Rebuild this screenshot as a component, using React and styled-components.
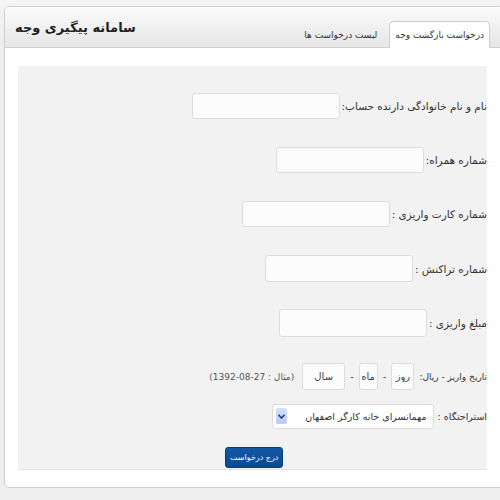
import React from "react";
import styled, { createGlobalStyle } from "styled-components";

const Global = createGlobalStyle`
  html, body { margin: 0; padding: 0; }
  body {
    background: #eeeeee;
    font-family: Tahoma, "DejaVu Sans", sans-serif;
    overflow: hidden;
  }
`;

const Page = styled.div`
  width: 500px;
  height: 500px;
  padding: 6px 0 0 4px;
  box-sizing: border-box;
  background: linear-gradient(#f4f4f4, #eeeeee 40px);
  overflow: hidden;
`;

const Box = styled.div`
  direction: rtl;
  width: 500px;
  box-sizing: border-box;
  border: 1px solid #cfcfcf;
  border-radius: 5px;
  background: #ffffff;
  overflow: hidden;
`;

const Header = styled.div`
  height: 40px;
  display: flex;
  justify-content: space-between;
  align-items: flex-end;
  padding: 0 13px 0 10px;
  background: linear-gradient(#fbfbfb, #e6e6e6);
  border-bottom: 1px solid #cfcfcf;
`;

const Tabs = styled.div`
  display: flex;
  align-items: flex-end;
  gap: 6px;
  margin-bottom: -1px;
`;

const Tab = styled.div`
  height: 27px;
  box-sizing: border-box;
  display: flex;
  align-items: center;
  padding: 0 5px;
  font-size: 9px;
  color: #333;
  white-space: nowrap;
  border: 1px solid ${(p) => (p.$active ? "#cfcfcf" : "transparent")};
  border-bottom: none;
  border-radius: 5px 5px 0 0;
  background: ${(p) => (p.$active ? "#ffffff" : "transparent")};
`;

const Title = styled.h1`
  margin: 0;
  align-self: center;
  font-size: 13px;
  font-weight: bold;
  color: #222;
  white-space: nowrap;
`;

const Content = styled.div`
  padding: 18px 16px 17px 13px;
`;

const Panel = styled.form`
  background: #f2f2f2;
  border-bottom: 1px solid #e2e2e2;
  padding: 27px 0 1px 0;
  display: flex;
  flex-direction: column;
  align-items: flex-start;
  height: 404px;
  box-sizing: border-box;
`;

const Row = styled.div`
  display: flex;
  align-items: center;
  gap: ${(p) => p.$gap ?? 2}px;
  margin-top: ${(p) => p.$mt ?? 0}px;
`;

const Label = styled.label`
  font-size: ${(p) => p.$size ?? 10.5}px;
  color: #333;
  white-space: nowrap;
`;

const Input = styled.input`
  width: ${(p) => p.$w ?? 148}px;
  height: ${(p) => p.$h ?? 26}px;
  box-sizing: border-box;
  border: 1px solid #dddddd;
  border-radius: 3px;
  background: #fcfcfc;
  font-family: inherit;
  font-size: 10px;
  color: #444;
  padding: 0 2px;
  text-align: center;
  direction: rtl;
  outline: none;
  &::placeholder { color: #444; }
`;

const Dash = styled.span`
  font-size: 10px;
  color: #555;
`;

const Hint = styled.span`
  font-size: 9px;
  color: #555;
  white-space: nowrap;
  margin-right: 3px;
`;

const SelectWrap = styled.div`
  position: relative;
  width: 162px;
  height: 25px;
  box-sizing: border-box;
  border: 1px solid #dddddd;
  border-radius: 3px;
  background: #ffffff;
`;

const Select = styled.select`
  appearance: none;
  -webkit-appearance: none;
  width: 100%;
  height: 100%;
  border: none;
  background: transparent;
  font-family: inherit;
  font-size: 9.5px;
  color: #333;
  padding: 0 6px 0 16px;
  direction: rtl;
  outline: none;
`;

const Arrow = styled.span`
  position: absolute;
  left: 3px;
  top: 3px;
  width: 11px;
  height: 16px;
  background: linear-gradient(#d4e0fb, #b9cbf3);
  border-radius: 2px;
  display: flex;
  align-items: center;
  justify-content: center;
  pointer-events: none;
`;

const Button = styled.button`
  align-self: flex-end;
  margin-top: 18px;
  margin-left: 207px;
  min-width: 56px;
  height: 21px;
  border: 1px solid #083d78;
  border-radius: 3px;
  background: linear-gradient(#1258a5, #0b4a90);
  color: #ffffff;
  font-family: inherit;
  font-size: 8px;
  padding: 0 4px;
  white-space: nowrap;
  cursor: pointer;
`;

export default function App() {
  return (
    <>
      <Global />
      <Page>
        <Box>
          <Header>
            <Tabs>
              <Tab $active>درخواست بازگشت وجه</Tab>
              <Tab>لیست درخواست ها</Tab>
            </Tabs>
            <Title>سامانه پیگیری وجه</Title>
          </Header>
          <Content>
            <Panel onSubmit={(e) => e.preventDefault()}>
              <Row>
                <Label>نام و نام خانوادگی دارنده حساب:</Label>
                <Input />
              </Row>
              <Row $mt={28}>
                <Label>شماره همراه:</Label>
                <Input />
              </Row>
              <Row $mt={28}>
                <Label>شماره کارت واریزی :</Label>
                <Input />
              </Row>
              <Row $mt={28}>
                <Label>شماره تراکنش :</Label>
                <Input $h={27} />
              </Row>
              <Row $mt={27}>
                <Label>مبلغ واریزی :</Label>
                <Input $h={28} />
              </Row>
              <Row $mt={26} $gap={5}>
                <Label $size={9}>تاریخ واریز - ریال:</Label>
                <Input $w={23} $h={27} placeholder="روز" />
                <Dash>-</Dash>
                <Input $w={19} $h={27} placeholder="ماه" />
                <Dash>-</Dash>
                <Input $w={43} $h={27} placeholder="سال" />
                <Hint>(مثال : 27-08-1392)</Hint>
              </Row>
              <Row $mt={14} $gap={4}>
                <Label $size={9.5}>استراحتگاه :</Label>
                <SelectWrap>
                  <Select defaultValue="1">
                    <option value="1">مهمانسرای خانه کارگر اصفهان</option>
                  </Select>
                  <Arrow>
                    <svg width="7" height="5" viewBox="0 0 7 5">
                      <path d="M0.5 0.8 L3.5 4 L6.5 0.8" fill="none" stroke="#1f3f8a" strokeWidth="1.6" />
                    </svg>
                  </Arrow>
                </SelectWrap>
              </Row>
              <Button type="submit">درج درخواست</Button>
            </Panel>
          </Content>
        </Box>
      </Page>
    </>
  );
}
